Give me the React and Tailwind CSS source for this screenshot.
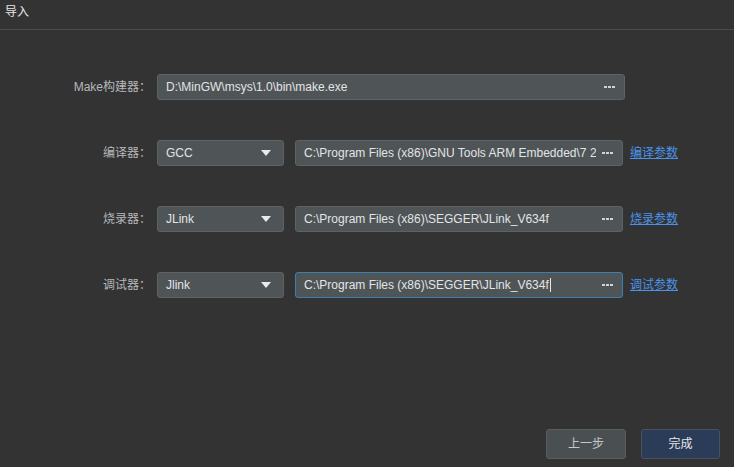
const font = { fontFamily: '"Liberation Sans", "Noto Sans CJK SC", sans-serif' }

function Dots() {
  return (
    <span className="flex items-center gap-[1px] shrink-0">
      <span className="w-[3px] h-[2px] bg-[#cdd2d6]" />
      <span className="w-[3px] h-[2px] bg-[#cdd2d6]" />
      <span className="w-[3px] h-[2px] bg-[#cdd2d6]" />
    </span>
  )
}

function PathInput({ value, width, active }) {
  return (
    <div
      className={`flex items-center h-[26px] rounded-[3px] border pl-[8px] pr-[9px] bg-[#4f5456] ${
        active ? 'border-[#3c7fae]' : 'border-[#5e6264]'
      } ${width}`}
    >
      <span className="flex-1 overflow-hidden whitespace-nowrap text-[12px] text-[#e2e4e6] leading-[16px] mr-[6px]">
        {value}
        {active && <span className="inline-block w-px h-[14px] bg-[#e2e4e6] align-middle ml-[1px] -mt-[2px]" />}
      </span>
      <Dots />
    </div>
  )
}

function Select({ value }) {
  return (
    <div className="flex items-center h-[26px] w-[127px] rounded-[3px] border border-[#5e6264] bg-[#4f5456] pl-[8px] pr-[12px]">
      <span className="flex-1 text-[12px] text-[#e2e4e6] leading-[16px]">{value}</span>
      <svg width="10" height="6" viewBox="0 0 10 6">
        <path d="M0 0h10L5 6z" fill="#e8eaec" />
      </svg>
    </div>
  )
}

function Row({ label, children }) {
  return (
    <div className="flex items-center h-[26px]">
      <div className="w-[152px] text-right text-[12px] text-[#b5b9bd] pr-[1px]">{label}</div>
      <div className="flex items-center ml-[5px]">{children}</div>
    </div>
  )
}

function ToolRow({ label, tool, path, link, active }) {
  return (
    <Row label={label}>
      <Select value={tool} />
      <div className="ml-[11px]">
        <PathInput value={path} width="w-[328px]" active={active} />
      </div>
      <a className="ml-[7px] text-[12px] text-[#4b93ea] underline cursor-pointer">{link}</a>
    </Row>
  )
}

export default function App() {
  return (
    <div className="w-[734px] h-[467px] bg-[#333333] flex flex-col" style={font}>
      <div className="h-[30px] border-b border-[#4c4c4c] flex items-center pl-[5px] pb-[6px] text-[12px] text-[#e8e8e8]">
        导入
      </div>
      <div className="flex flex-col gap-[40px] pt-[44px]">
        <Row label="Make构建器：">
          <PathInput value="D:\MinGW\msys\1.0\bin\make.exe" width="w-[468px]" />
        </Row>
        <ToolRow
          label="编译器："
          tool="GCC"
          path="C:\Program Files (x86)\GNU Tools ARM Embedded\7 2018-q2-update\bin"
          link="编译参数"
        />
        <ToolRow
          label="烧录器："
          tool="JLink"
          path="C:\Program Files (x86)\SEGGER\JLink_V634f"
          link="烧录参数"
        />
        <ToolRow
          label="调试器："
          tool="Jlink"
          path="C:\Program Files (x86)\SEGGER\JLink_V634f"
          link="调试参数"
          active
        />
      </div>
      <div className="mt-auto flex justify-end gap-[15px] pr-[14px] pb-[8px]">
        <button className="w-[80px] h-[30px] rounded-[3px] border border-[#595d5f] bg-[#4a4f51] text-[12px] text-[#c4c8cb]">
          上一步
        </button>
        <button className="w-[79px] h-[30px] rounded-[3px] border border-[#4a5160] bg-[#2b3c58] text-[12px] text-[#e6e8ea]">
          完成
        </button>
      </div>
    </div>
  )
}
